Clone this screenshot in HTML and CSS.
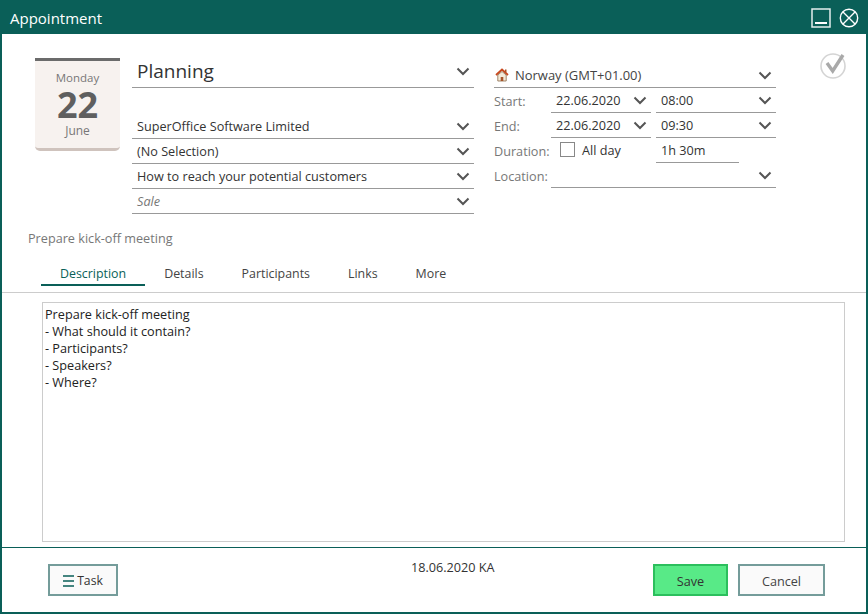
FILE: index.html
```html
<!DOCTYPE html>
<html lang="en">
<head>
<meta charset="utf-8">
<title>Appointment</title>
<link rel="stylesheet" href="styles.css">
</head>
<body>
<svg class="sprite" width="0" height="0" aria-hidden="true"><symbol id="chev" viewBox="0 0 14 9"><path d="M1.500 1.500 7 7l5.500-5.500" fill="none" stroke="#555" stroke-width="2"/></symbol></svg>
<div class="window">
  <header class="titlebar">
    <span class="title">Appointment</span>
    <div class="winbtns">
      <svg width="20" height="20" viewBox="0 0 20 20"><rect x="1" y="1" width="18" height="18" fill="none" stroke="#e4eeed" stroke-width="1.500"/><path d="M4 15h12" stroke="#fff" stroke-width="2"/></svg>
      <svg width="20" height="20" viewBox="0 0 20 20"><circle cx="10" cy="10" r="8.700" fill="none" stroke="#fff" stroke-width="1.400"/><path d="M4 4l12 12M16 4 4 16" stroke="#fff" stroke-width="1.400"/></svg>
    </div>
  </header>
  <main class="body">
    <section class="top">
      <div class="cal">
        <div class="cal-day">Monday</div>
        <div class="cal-num">22</div>
        <div class="cal-month">June</div>
      </div>
      <div class="fields">
        <div class="row big"><span>Planning</span><svg class="chev"><use href="#chev"/></svg></div>
        <div class="gap"></div>
        <div class="row"><span>SuperOffice Software Limited</span><svg class="chev"><use href="#chev"/></svg></div>
        <div class="row"><span>(No Selection)</span><svg class="chev"><use href="#chev"/></svg></div>
        <div class="row"><span>How to reach your potential customers</span><svg class="chev"><use href="#chev"/></svg></div>
        <div class="row sale"><span>Sale</span><svg class="chev"><use href="#chev"/></svg></div>
      </div>
      <div class="when">
        <div class="row tz">
          <svg class="home" width="14" height="14" viewBox="0 0 14 14"><path d="M1 7 7 1.500 13 7" fill="none" stroke="#c8471c" stroke-width="1.800"/><path d="M2.800 7v6h8.400V7L7 3.500z" fill="#f4ead8" stroke="#8a6a4a" stroke-width=".8"/><rect x="5.700" y="9" width="2.600" height="4" fill="#a5552a"/><rect x="10" y="1.500" width="1.500" height="3" fill="#a5552a"/></svg>
          <span>Norway (GMT+01.00)</span><svg class="chev"><use href="#chev"/></svg>
        </div>
        <div class="when-row">
          <label class="lbl">Start:</label>
          <div class="row date"><span>22.06.2020</span><svg class="chev"><use href="#chev"/></svg></div>
          <div class="row time"><span>08:00</span><svg class="chev"><use href="#chev"/></svg></div>
        </div>
        <div class="when-row">
          <label class="lbl">End:</label>
          <div class="row date"><span>22.06.2020</span><svg class="chev"><use href="#chev"/></svg></div>
          <div class="row time"><span>09:30</span><svg class="chev"><use href="#chev"/></svg></div>
        </div>
        <div class="when-row">
          <label class="lbl">Duration:</label>
          <div class="allday"><span class="check"></span><span>All day</span></div>
          <div class="row dur"><span>1h 30m</span></div>
        </div>
        <div class="when-row">
          <label class="lbl">Location:</label>
          <div class="row loc"><span></span><svg class="chev"><use href="#chev"/></svg></div>
        </div>
      </div>
      <svg class="done" width="28" height="28" viewBox="0 0 28 28"><circle cx="14" cy="15" r="12" fill="none" stroke="#d4d4d4" stroke-width="1.600"/><path d="M8 12l5.700 8L24 4" fill="none" stroke="#a9a9a9" stroke-width="3.400"/></svg>
    </section>
    <div class="subject">Prepare kick-off meeting</div>
    <nav class="tabs">
      <span class="tab active">Description</span>
      <span class="tab">Details</span>
      <span class="tab">Participants</span>
      <span class="tab">Links</span>
      <span class="tab">More</span>
    </nav>
    <div class="desc-wrap">
      <div class="desc">Prepare kick-off meeting
- What should it contain?
- Participants?
- Speakers?
- Where?</div>
    </div>
  </main>
  <footer class="foot">
    <button class="btn task"><svg width="11" height="12" viewBox="0 0 11 12"><path d="M0 1h11M0 6h11M0 11h11" stroke="#0a5f58" stroke-width="1.400"/></svg>Task</button>
    <div class="stamp">18.06.2020 KA</div>
    <div class="actions">
      <button class="btn save">Save</button>
      <button class="btn cancel">Cancel</button>
    </div>
  </footer>
</div>
</body>
</html>
```
FILE: styles.css
```css
* { box-sizing: border-box; }
html, body { margin: 0; padding: 0; background: #fff; }
body { font-family: "Open Sans", "Noto Sans", sans-serif; font-size: 12.670px; color: #333; }
.sprite { position: absolute; }
.window { width: 868px; height: 614px; display: flex; flex-direction: column; border: 2px solid #0a5f58; border-top: 0; overflow: hidden; }
.titlebar { height: 34px; flex: none; margin: 0 -2px; padding: 0 9px 0 10px; background: #0a5f58; color: #fff; display: flex; align-items: center; justify-content: space-between; }
.title { font-size: 15px; padding-top: 2px; }
.winbtns { display: flex; gap: 8px; margin-top: 1px; }
.body { flex: 1; display: flex; flex-direction: column; min-height: 0; }
.top { position: relative; display: flex; padding: 24px 0 0 33px; height: 180px; flex: none; }
.cal { width: 85px; height: 93px; background: #f7f2ef; border-top: 3px solid #6b6b6b; border-bottom: 3px solid #cfc3bd; border-radius: 0 0 5px 5px; text-align: center; color: #777; display: flex; flex-direction: column; align-items: center; padding-top: 9px; }
.cal-day { font-size: 11.500px; line-height: 16px; }
.cal-num { font-size: 36px; font-weight: 700; line-height: 32px; height: 32px; margin-top: 3px; color: #5f5f5f; }
.cal-month { font-size: 12px; line-height: 15px; margin-top: 2px; }
.fields { width: 342px; margin-left: 12px; }
.row { height: 25px; display: flex; align-items: center; justify-content: space-between; border-bottom: 1px solid #999; padding: 0 4px 0 5px; }
.big { height: 30px; font-size: 19px; color: #333; padding-bottom: 3px; }
.gap { height: 26px; }
.sale { font-style: italic; color: #777; }
.chev { width: 14px; height: 9px; flex: none; }
.when { width: 282px; margin-left: 20px; padding-top: 5px; }
.tz { justify-content: flex-start; padding-left: 1px; gap: 6px; color: #444; font-size: 12.970px; }
.tz .chev { margin-left: auto; }
.home { flex: none; }
.when-row { display: flex; height: 25px; align-items: stretch; }
.lbl { width: 57px; flex: none; color: #777; display: flex; align-items: center; padding-top: 1px; }
.date { width: 100px; padding-right: 4px; margin-right: 5px; }
.time { width: 120px; }
.loc { width: 225px; }
.allday { width: 105px; display: flex; align-items: center; gap: 7px; padding: 0 0 2px 9px; }
.check { width: 15px; height: 15px; border: 1px solid #888; background: #fff; }
.dur { width: 83px; }
.done { position: absolute; left: 817px; top: 17px; }
.subject { margin: 0 0 0 26px; height: 20px; line-height: 48px; color: #777; flex: none; }
.tabs { display: flex; margin-top: 15px; padding: 0 0 6px 39px; height: 44px; align-items: flex-end; border-bottom: 1px solid #ccc; flex: none; font-size: 12.400px; }
.tab { padding: 1px 19px 0; height: 23px; line-height: 19px; color: #444; }
.tab.active { color: #0a5f58; border-bottom: 2px solid #0a5f58; }
.desc-wrap { flex: 1; padding: 9px 21px 5px 40px; min-height: 0; }
.desc { height: 100%; border: 1px solid #ccc; padding: 3px 2px; white-space: pre-line; line-height: 17px; color: #222; }
.foot { height: 65px; flex: none; border-top: 1px solid #0a5f58; display: flex; align-items: flex-start; padding: 16px 41px 0 46px; }
.btn { height: 32px; font: inherit; border: 2px solid #749c9a; background: #fafafa; color: #333; display: flex; align-items: center; justify-content: center; padding: 1px 0 0; }
.task { width: 70px; gap: 3px; font-size: 12.200px; }
.stamp { margin: -7px auto 0 293px; line-height: 20px; color: #333; white-space: nowrap; }
.actions { display: flex; gap: 10px; }
.save { width: 75px; background: #58ea87; border-color: #2cbf5d; }
.cancel { width: 87px; color: #444; }
```
